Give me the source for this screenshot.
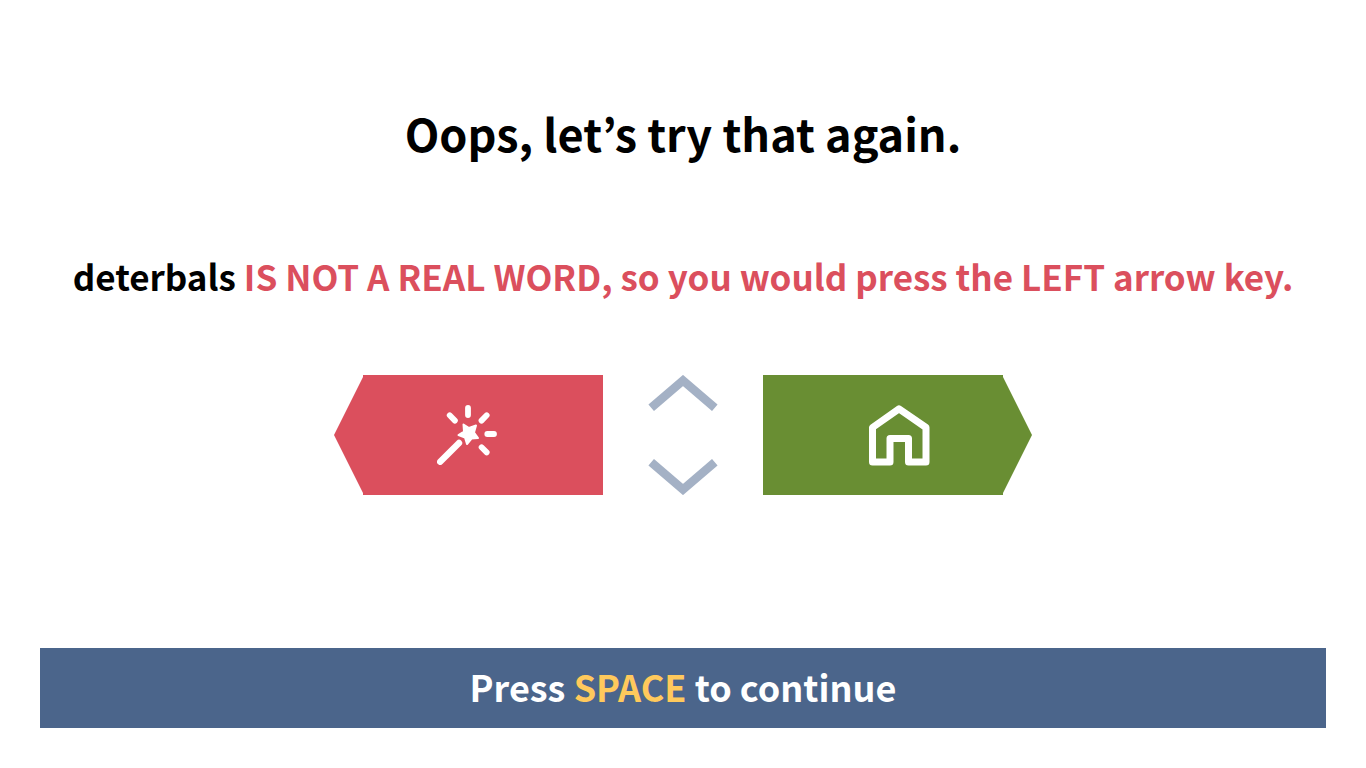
<main>
  <h1>Oops, let’s try that again.</h1>
  <p class="explain">deterbals <span>IS NOT A REAL WORD, so you would press the LEFT arrow key.</span></p>
  <div class="keys">
    <button class="key left" aria-label="Left arrow: made-up word">
      <svg width="60" height="60" viewBox="0 0 60 60" fill="none" stroke="#fff" stroke-linecap="round">
        <path d="M3.200 56.800 22 38" stroke-width="6.400" />
        <path d="M31 3v7M12.700 10.300l5.200 5.300M49.700 10.300l-5.200 5.300M50.300 29H57M44.600 42.300l5.100 5.100" stroke-width="5.800" />
        <path d="M26.500 19.500 32 23l7-2.500-2 7 4 5.500-6.500.5L30 39l-2-6.500-6.500-2.500 5.500-3.500z" fill="#fff" stroke-width="2" stroke-linejoin="round" />
      </svg>
    </button>
    <div class="arrows">
      <svg width="70" height="36" viewBox="0 0 70 36" fill="none" stroke="#a4b1c5" stroke-width="8.500"><path d="M3.200 32.800 35 5.500l31.800 27.300" /></svg>
      <svg width="70" height="36" viewBox="0 0 70 36" fill="none" stroke="#a4b1c5" stroke-width="8.500"><path d="M3.200 3.200 35 30.500 66.800 3.200" /></svg>
    </div>
    <button class="key right" aria-label="Right arrow: real word">
      <svg width="62" height="62" viewBox="0 0 62 62" fill="none" stroke="#fff" stroke-width="7" stroke-linejoin="round">
        <path d="M4.500 58V23.500L31 4.800l27 18.700V58H40.500V34.500H22V58z" />
      </svg>
    </button>
  </div>
  <footer>Press <span>SPACE</span> to continue</footer>
</main>

<style>
  :global(body) { margin: 0; background: #fff; }
  main { box-sizing: border-box; min-height: 100vh; padding: 40px; display: flex; flex-direction: column; font-family: "Noto Sans CJK KR", "Noto Sans", sans-serif; text-align: center; color: #000; }
  h1 { margin: 57px 0 0; font-size: 45px; line-height: 72px; font-weight: 600; }
  .explain { margin: 77px 0 0; font-size: 35px; line-height: 60px; font-weight: 600; }
  .explain span { color: #db4f5d; }
  .keys { margin-top: 69px; display: flex; justify-content: center; gap: 45px; }
  .key { display: flex; align-items: center; justify-content: center; box-sizing: border-box; width: 269px; height: 120px; margin: 0; padding: 0; border: 0; }
  .left { padding-right: 3px; background: #db4f5d; clip-path: polygon(29px 0, 100% 0, 100% 100%, 29px 100%, 29px 118px, 0 50%, 29px 2px); }
  .right { padding-left: 2px; background: #698e33; clip-path: polygon(0 0, 240px 0, 240px 2px, 100% 50%, 240px 118px, 240px 100%, 0 100%); }
  .arrows { display: flex; flex-direction: column; justify-content: space-between; }
  .arrows svg { display: block; }
  footer { margin-top: auto; padding-bottom: 4px; background: #4b658b; color: #fff; font-size: 36px; line-height: 76px; font-weight: 700; }
  footer span { color: #ffc95c; }
</style>
